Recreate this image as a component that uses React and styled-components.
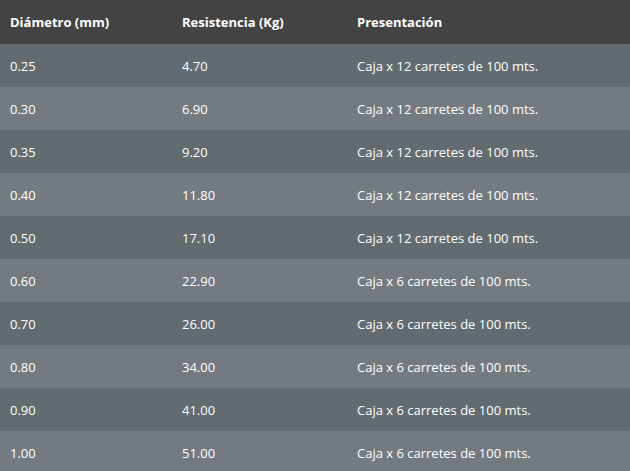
import styled, { createGlobalStyle } from 'styled-components';

const GlobalStyle = createGlobalStyle`
	body {
		margin: 0;
		background: #737b81;
		font-family: 'Open Sans', 'Noto Sans', sans-serif;
	}
`;

const rows = [
	['0.25', '4.70', 'Caja x 12 carretes de 100 mts.'],
	['0.30', '6.90', 'Caja x 12 carretes de 100 mts.'],
	['0.35', '9.20', 'Caja x 12 carretes de 100 mts.'],
	['0.40', '11.80', 'Caja x 12 carretes de 100 mts.'],
	['0.50', '17.10', 'Caja x 12 carretes de 100 mts.'],
	['0.60', '22.90', 'Caja x 6 carretes de 100 mts.'],
	['0.70', '26.00', 'Caja x 6 carretes de 100 mts.'],
	['0.80', '34.00', 'Caja x 6 carretes de 100 mts.'],
	['0.90', '41.00', 'Caja x 6 carretes de 100 mts.'],
	['1.00', '51.00', 'Caja x 6 carretes de 100 mts.'],
];

function App() {
	return (
		<>
			<GlobalStyle />
			<Table>
				<HeaderRow>
					<Cell>Diámetro (mm)</Cell>
					<Cell>Resistencia (Kg)</Cell>
					<Cell>Presentación</Cell>
				</HeaderRow>
				{rows.map((row, i) => (
					<Row key={row[0]} dark={i % 2 === 0}>
						{row.map((value, j) => (
							<Cell key={j}>{value}</Cell>
						))}
					</Row>
				))}
			</Table>
		</>
	);
}

const Table = styled.div`
	display: flex;
	flex-direction: column;
	width: 630px;
	color: #ffffff;
	font-size: 13px;
`;

const Row = styled.div.withConfig({ shouldForwardProp: (p) => p !== 'dark' })`
	display: grid;
	grid-template-columns: 172px 175px 1fr;
	align-items: center;
	height: 43px;
	background: ${(props) => (props.dark ? '#616b70' : '#737b81')};
`;

const HeaderRow = styled(Row)`
	height: 44px;
	background: #434343;
	font-weight: 700;
`;

const Cell = styled.div`
	padding-left: 10px;
	white-space: nowrap;
`;

export default App;
